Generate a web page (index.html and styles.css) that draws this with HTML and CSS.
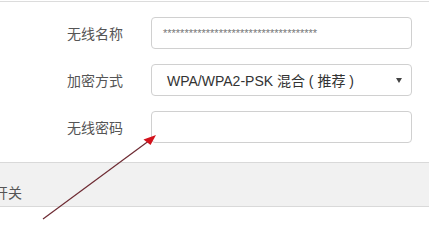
FILE: index.html
```html
<!DOCTYPE html>
<html lang="zh-CN">
<head>
<meta charset="utf-8">
<link rel="stylesheet" href="styles.css">
</head>
<body>
<div class="page">
  <div class="topline"></div>
  <div class="form">
    <div class="row">
      <div class="label">无线名称</div>
      <div class="field"><span class="stars">************************************</span></div>
    </div>
    <div class="row">
      <div class="label">加密方式</div>
      <div class="field select"><span class="value">WPA/WPA2-PSK 混合 ( 推荐 )</span><span class="caret"></span></div>
    </div>
    <div class="row">
      <div class="label">无线密码</div>
      <div class="field"></div>
    </div>
  </div>
  <div class="band"><span class="band-title">开关</span></div>
  <svg class="annot" width="429" height="230" viewBox="0 0 429 230">
    <line x1="43" y1="219" x2="148" y2="141.5" stroke="#6e2b33" stroke-width="1.2"/>
    <polygon points="156,135 143.5,139.5 150.5,145" fill="#d3121c"/>
  </svg>
</div>
</body>
</html>
```
FILE: styles.css
```css
html, body {
  margin: 0;
  padding: 0;
  background: #fff;
}
.page {
  position: relative;
  width: 429px;
  height: 230px;
  overflow: hidden;
  font-family: "Liberation Sans", "Noto Sans CJK SC", sans-serif;
  color: #555;
}
.topline {
  height: 1px;
  margin-top: 1px;
  background: #dcdcdc;
}
.form {
  display: flex;
  flex-direction: column;
  gap: 15px;
  padding-top: 15px;
}
.row {
  display: flex;
  align-items: center;
  gap: 28px;
}
.label {
  width: 123px;
  text-align: right;
  font-size: 14px;
  color: #555;
}
.field {
  box-sizing: border-box;
  width: 261px;
  height: 32px;
  border: 1px solid #d0d0d0;
  border-radius: 4px;
  display: flex;
  align-items: center;
  padding-left: 11px;
  background: #fff;
}
.stars {
  font-size: 11px;
  color: #777;
}
.select {
  padding-left: 15px;
  padding-right: 9px;
  justify-content: space-between;
}
.value {
  font-size: 14px;
  color: #333;
}
.caret {
  width: 0;
  height: 0;
  border-left: 3px solid transparent;
  border-right: 3px solid transparent;
  border-top: 5px solid #444;
}
.band {
  box-sizing: border-box;
  margin-top: 19px;
  height: 45px;
  background: #f1f1f1;
  border-top: 1px solid #d9d9d9;
  border-bottom: 1px solid #d9d9d9;
  padding-top: 19px;
}
.band-title {
  display: block;
  margin-left: -6px;
  font-size: 14px;
  color: #555;
}
.annot {
  position: absolute;
  left: 0;
  top: 0;
}
```
